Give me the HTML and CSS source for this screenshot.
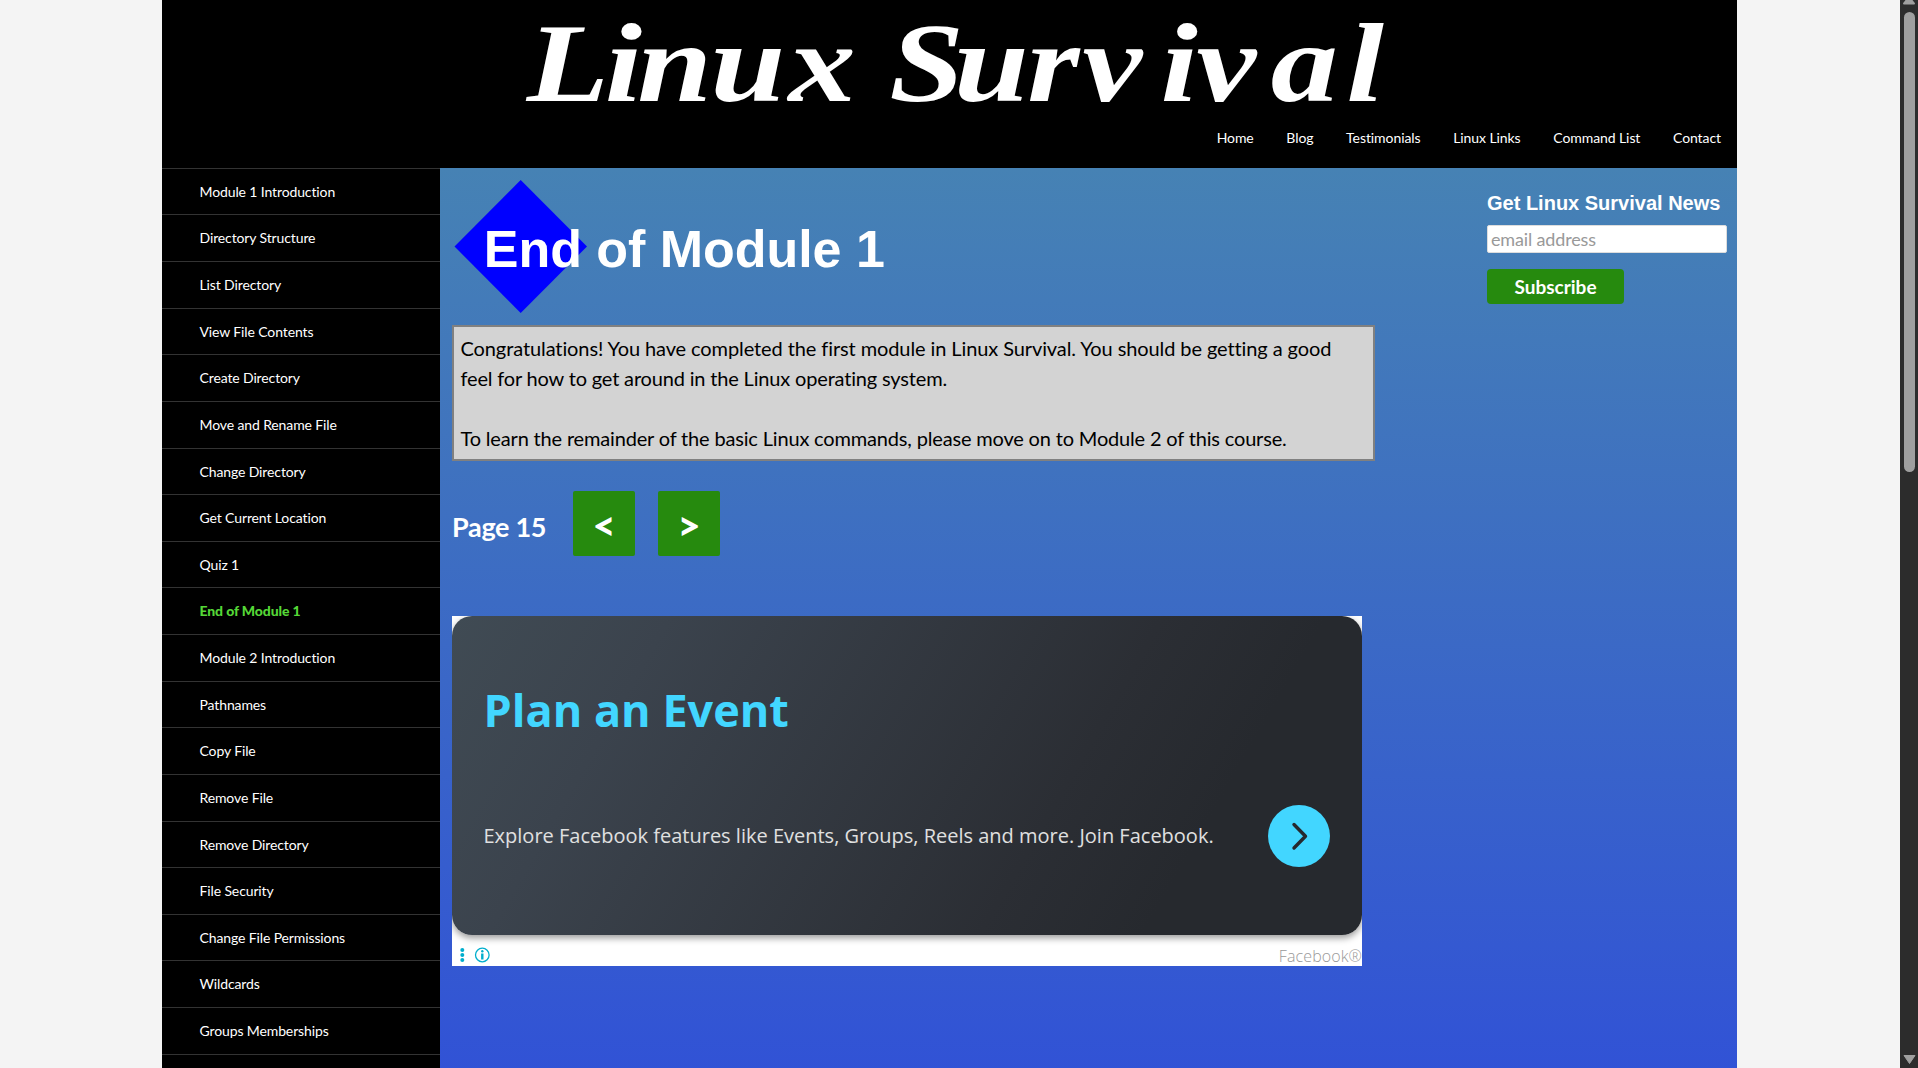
FILE: index.html
```html
<!DOCTYPE html>
<html lang="en">
<head>
<meta charset="utf-8">
<title>End of Module 1 | Linux Survival</title>
<link rel="stylesheet" href="styles.css">
</head>
<body>
<div class="viewport">
  <div class="site">
    <header class="header">
      <svg class="logo" viewBox="0 0 890 110" role="img" aria-label="Linux Survival">
        <g class="logo-text" transform="translate(0 101) scale(1.2 1)">
          <text x="4 69 96 157 222">Linux</text>
          <text x="306 360 421 467 532 562 624 687">Survival</text>
        </g>
      </svg>
      <nav class="nav">
        <a>Home</a><a>Blog</a><a>Testimonials</a><a>Linux Links</a><a>Command List</a><a>Contact</a>
      </nav>
    </header>
    <div class="body">
      <ul class="sidebar">
        <li>Module 1 Introduction</li>
        <li>Directory Structure</li>
        <li>List Directory</li>
        <li>View File Contents</li>
        <li>Create Directory</li>
        <li>Move and Rename File</li>
        <li>Change Directory</li>
        <li>Get Current Location</li>
        <li>Quiz 1</li>
        <li class="current">End of Module 1</li>
        <li>Module 2 Introduction</li>
        <li>Pathnames</li>
        <li>Copy File</li>
        <li>Remove File</li>
        <li>Remove Directory</li>
        <li>File Security</li>
        <li>Change File Permissions</li>
        <li>Wildcards</li>
        <li>Groups Memberships</li>
        <li></li>
      </ul>
      <main class="content">
        <svg class="title" viewBox="0 0 460 140" role="img" aria-label="End of Module 1">
          <path d="M68.700 7L135 73.500L68.700 140L2.500 73.500Z" fill="#00f"/>
          <text x="31.800" y="94.300" textLength="401">End of Module 1</text>
        </svg>
        <div class="message">
          <p><span class="first-line">Congratulations! You have completed the first module in Linux Survival. You should be getting a good</span><br>feel for how to get around in the Linux operating system.</p>
          <p>To learn the remainder of the basic Linux commands, please move on to Module 2 of this course.</p>
        </div>
        <div class="pager"><span class="page">Page 15</span><button>&lt;</button><button>&gt;</button></div>
        <section class="ad">
          <div class="card">
            <h2>Plan an Event</h2>
            <div class="card-row">
              <p>Explore Facebook features like Events, Groups, Reels and more. Join Facebook.</p>
              <svg class="go" viewBox="0 0 62 62"><circle cx="31" cy="31" r="31" fill="#42d6ff"/><path d="M26 19.500L37.500 31.300L26 43" fill="none" stroke="#26292e" stroke-width="3.400" stroke-linecap="round" stroke-linejoin="round"/></svg>
            </div>
          </div>
          <div class="ad-foot">
            <svg width="32" height="16" viewBox="0 0 32 16"><g fill="#00aecd"><circle cx="4.300" cy="3" r="2"/><circle cx="4.300" cy="8" r="2"/><circle cx="4.300" cy="13" r="2"/><circle cx="24.300" cy="4.200" r="1.200"/><path d="M23.100 6.500h2.400v6h-2.400z"/></g><circle cx="24.300" cy="8" r="6.800" fill="none" stroke="#00aecd" stroke-width="1.300"/></svg>
            <span>Facebook®</span>
          </div>
        </section>
      </main>
      <aside class="news">
        <h3>Get Linux Survival News</h3>
        <input type="text" placeholder="email address">
        <button>Subscribe</button>
      </aside>
    </div>
  </div>
  <div class="scrollbar">
    <svg width="18" height="12" viewBox="0 0 18 12"><path d="M5.500 0H12.500L15 3.200Q15 4.500 14 4.500H4Q3 4.500 3 3.200Z" fill="#9f9f9f"/></svg>
    <div class="thumb"></div>
    <svg class="down" width="18" height="16" viewBox="0 0 18 16"><path d="M4 3.500H15L9.500 11.500Z" fill="#9f9f9f" stroke="#9f9f9f" stroke-linejoin="round"/></svg>
  </div>
</div>
</body>
</html>
```
FILE: styles.css
```css
* { box-sizing: border-box; }
html, body { margin: 0; height: 100%; overflow: hidden; }
body { background: #f4f4f4; font-family: Lato, sans-serif; }
p, h2, h3, ul { margin: 0; padding: 0; }
.viewport { display: flex; height: 1068px; }
.site { width: 1575px; margin-left: 162px; height: 1068px; overflow: hidden; background: #000; }
.header { height: 167.8px; display: flex; flex-direction: column; align-items: flex-end; }
.logo { width: 890px; height: 110px; margin-right: 325px; flex: none; overflow: visible; }
.logo-text { fill: #fff; font: italic bold 112px "Liberation Serif", serif; }
.nav { display: flex; gap: 32.7px; padding: 16px 16px 0 0; color: #fff; font-size: 14px; line-height: 24px; letter-spacing: -.08px; }
.body { display: flex; height: 920px; background: linear-gradient(#4682b4, #3152d6 910px); }
.sidebar { width: 278px; background: #000; list-style: none; flex: none; }
.sidebar li { height: 46.625px; border-top: 1px solid #333; padding-left: 37.5px; color: #fff; font-size: 14px; line-height: 45.3px; letter-spacing: -.12px; }
.sidebar .current { color: #55d737; font-weight: 900; letter-spacing: -.12px; }
.content { width: 934px; padding: 5px 0 0 12px; flex: none; }
.title { display: block; width: 460px; height: 140px; margin-bottom: 12px; overflow: visible; }
.title text { fill: #fff; font: bold 52px "Liberation Sans", Arial, sans-serif; }
.message { width: 923px; height: 136px; border: 2px solid #808080; background: #d3d3d3; padding: 6px 6px 6px 6.5px; color: #000; font-size: 20px; line-height: 30px; letter-spacing: -.17px; white-space: nowrap; }
.message .first-line { letter-spacing: -.1px; }
.message p + p { margin-top: 30px; }
.pager { display: flex; height: 65px; margin-top: 30px; color: #fff; font-weight: 700; }
.page { width: 121px; font-size: 27px; line-height: 72px; letter-spacing: -.3px; }
button { font-family: Lato, sans-serif; font-weight: 700; color: #fff; background: #268a0e; border: 0; padding: 0; }
.pager button { width: 62px; height: 65px; border-radius: 2px; font-size: 40px; font-weight: 900; padding-top: 3px; margin-right: 23px; }
.ad { width: 910px; height: 350px; margin-top: 60px; background: #fff; font-family: "Open Sans", sans-serif; overflow: hidden; }
.card { height: 319px; border-radius: 20px; background: linear-gradient(120deg, #404b54 0%, #3b434d 20%, #2b2e34 65%, #26292e 80%); box-shadow: 0 3px 7px rgba(0,0,0,.4); padding: 63px 32px 0 31.5px; }
.card h2 { color: #42d6ff; font-size: 45px; line-height: 62px; font-weight: 700; }
.card-row { display: flex; justify-content: space-between; align-items: center; margin-top: 64px; height: 62px; }
.card-row p { color: #e0e0e0; font-size: 20px; white-space: nowrap; }
.go { width: 62px; height: 62px; }
.ad-foot { height: 31px; display: flex; justify-content: space-between; align-items: center; padding: 10px 0 0 6px; color: #999; font-size: 16px; font-weight: 300; }
.ad-foot span { padding-top: 2px; letter-spacing: .1px; }
.news { padding: 22px 0 0 113px; }
.news h3 { font: bold 20px/26px "Liberation Sans", Arial, sans-serif; color: #fff; white-space: nowrap; }
.news input { display: block; width: 240px; height: 28px; margin: 9px 0 16px; border: 1px solid #ddd; border-radius: 2px; padding: 0 3px; font: 18px Lato, sans-serif; letter-spacing: -.15px; }
.news input::placeholder { color: #999; }
.news button { width: 137px; height: 35px; border-radius: 4px; font-size: 19px; }
.scrollbar { width: 18px; margin-left: auto; background: #2c2c2c; display: flex; flex-direction: column; align-items: center; }
.scrollbar svg { display: block; flex: none; }
.thumb { width: 11px; height: 460px; margin-left: 1px; border-radius: 5.5px; background: #9f9f9f; }
.down { margin-top: auto; }
```
